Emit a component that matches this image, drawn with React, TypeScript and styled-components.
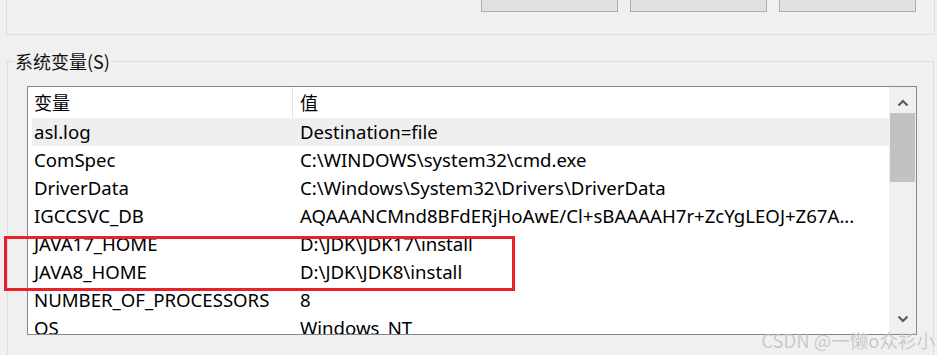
import React from "react";
import styled, { createGlobalStyle } from "styled-components";

const Global = createGlobalStyle`
  html, body { margin: 0; padding: 0; background: #f0f0f0; }
  body { font-family: "Noto Sans", "Noto Sans CJK SC", sans-serif; }
`;

const Page = styled.div`
  position: relative;
  width: 937px;
  height: 355px;
  overflow: hidden;
  background: #f0f0f0;
  box-sizing: border-box;
  padding: 0 2px 0 6px;
  color: #000;
  font-size: 18.6px;
`;

const TopGroup = styled.div`
  margin-top: -21px;
  height: 56px;
  box-sizing: border-box;
  border: 1px solid #dcdcdc;
  display: flex;
  justify-content: flex-end;
  align-items: flex-start;
  padding: 2px 18px 0 0;
  gap: 12px;
`;

const PushButton = styled.div`
  width: 137px;
  height: 30px;
  box-sizing: border-box;
  border: 1px solid #adadad;
  background: #e1e1e1;
  display: flex;
  align-items: flex-start;
  justify-content: center;
  line-height: 10px;
  font-size: 18px;
  font-family: "Noto Sans CJK SC", sans-serif;
`;

const SysGroup = styled.fieldset`
  margin: 15px 0 0 1px;
  padding: 0;
  border: 1px solid #dcdcdc;
  width: 927px;
  box-sizing: border-box;
  height: 320px;
  min-width: 0;
`;

const Legend = styled.legend`
  margin-left: 6px;
  padding: 0 1px;
  font-family: "Noto Sans CJK SC", sans-serif;
  font-size: 18px;
  line-height: 22px;
  color: #111;
`;

const ListBox = styled.div`
  margin: 14px 16px 0 19px;
  height: 249px;
  box-sizing: border-box;
  border: 1px solid #828790;
  background: #fff;
  display: flex;
`;

const ListContent = styled.div`
  flex: 1;
  min-width: 0;
  overflow: hidden;
  padding-left: 4px;
`;

const GridRow = styled.div<{ $head?: boolean; $hl?: boolean }>`
  display: grid;
  grid-template-columns: 261px 1fr;
  height: ${(p) => (p.$head ? 31 : 28)}px;
  line-height: ${(p) => (p.$head ? 31 : 28)}px;
  background: ${(p) => (p.$hl ? "#efefef" : "transparent")};
  white-space: nowrap;
`;

const NameCell = styled.div<{ $head?: boolean }>`
  padding-left: 2px;
  overflow: hidden;
  font-family: ${(p) => (p.$head ? `"Noto Sans CJK SC", sans-serif` : `"Noto Sans", sans-serif`)};
  font-size: ${(p) => (p.$head ? "18px" : "inherit")};
  border-right: ${(p) => (p.$head ? "1px solid #e5e5e5" : "none")};
`;

const ValueCell = styled.div<{ $head?: boolean }>`
  padding-left: 7px;
  overflow: hidden;
  font-family: ${(p) => (p.$head ? `"Noto Sans CJK SC", sans-serif` : `"Noto Sans", sans-serif`)};
  font-size: ${(p) => (p.$head ? "18px" : "inherit")};
`;

const ScrollBar = styled.div`
  width: 27px;
  background: #f0f0f0;
  display: flex;
  flex-direction: column;
  align-items: center;
`;

const ArrowBtn = styled.div<{ $down?: boolean }>`
  height: 26px;
  width: 100%;
  display: flex;
  align-items: ${(p) => (p.$down ? "flex-start" : "flex-end")};
  justify-content: center;
  padding: ${(p) => (p.$down ? "7px 0 0" : "0 0 6px")};
  box-sizing: border-box;
`;

const Track = styled.div`
  flex: 1;
  width: 100%;
  padding: 0 1px;
  box-sizing: border-box;
`;

const Thumb = styled.div`
  height: 69px;
  background: #c2c2c2;
`;

const Highlight = styled.div`
  position: absolute;
  left: 4px;
  top: 236px;
  width: 511px;
  height: 55px;
  box-sizing: border-box;
  border: 3px solid #e8212b;
  pointer-events: none;
`;

const Watermark = styled.div`
  position: absolute;
  right: 2px;
  bottom: 2px;
  font-family: "Noto Sans CJK SC", sans-serif;
  font-size: 18.5px;
  color: rgba(160, 160, 160, 0.55);
  text-shadow: 0 0 1px rgba(255, 255, 255, 0.6);
`;

const Chevron = ({ down }: { down?: boolean }) => (
  <svg width="12" height="8" viewBox="0 0 12 8">
    <path
      d={down ? "M1.5 1.5 L6 6 L10.5 1.5" : "M1.5 6.5 L6 2 L10.5 6.5"}
      fill="none"
      stroke="#5a5a5a"
      strokeWidth="2.2"
    />
  </svg>
);

const rows: [string, string][] = [
  ["asl.log", "Destination=file"],
  ["ComSpec", "C:\\WINDOWS\\system32\\cmd.exe"],
  ["DriverData", "C:\\Windows\\System32\\Drivers\\DriverData"],
  ["IGCCSVC_DB", "AQAAANCMnd8BFdERjHoAwE/Cl+sBAAAAH7r+ZcYgLEOJ+Z67A..."],
  ["JAVA17_HOME", "D:\\JDK\\JDK17\\install"],
  ["JAVA8_HOME", "D:\\JDK\\JDK8\\install"],
  ["NUMBER_OF_PROCESSORS", "8"],
  ["OS", "Windows_NT"],
];

export default function App() {
  return (
    <>
      <Global />
      <Page>
        <TopGroup>
          <PushButton>新建(W)...</PushButton>
          <PushButton>编辑(I)...</PushButton>
          <PushButton>删除(L)</PushButton>
        </TopGroup>
        <SysGroup>
          <Legend>系统变量(S)</Legend>
          <ListBox>
            <ListContent>
              <GridRow $head>
                <NameCell $head>变量</NameCell>
                <ValueCell $head>值</ValueCell>
              </GridRow>
              {rows.map(([n, v], i) => (
                <GridRow key={n} $hl={i === 0}>
                  <NameCell>{n}</NameCell>
                  <ValueCell>{v}</ValueCell>
                </GridRow>
              ))}
            </ListContent>
            <ScrollBar>
              <ArrowBtn>
                <Chevron />
              </ArrowBtn>
              <Track>
                <Thumb />
              </Track>
              <ArrowBtn $down>
                <Chevron down />
              </ArrowBtn>
            </ScrollBar>
          </ListBox>
        </SysGroup>
        <Highlight />
        <Watermark>CSDN @一懒o众衫小</Watermark>
      </Page>
    </>
  );
}
